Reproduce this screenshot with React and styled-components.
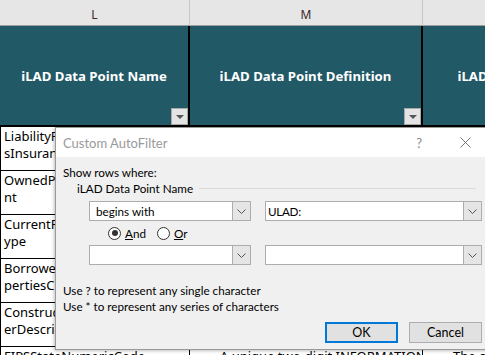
import React from 'react';
import styled, { createGlobalStyle } from 'styled-components';

const GlobalStyle = createGlobalStyle`
  html, body {
    margin: 0;
    padding: 0;
    background: #ffffff;
    overflow: hidden;
  }
`;

const columns = [
  { letter: 'L', title: 'iLAD Data Point Name' },
  { letter: 'M', title: 'iLAD Data Point Definition' },
  { letter: 'N', title: 'iLAD Data Point Format' },
];

const rows = [
  ['LiabilityP', 'sInsuran'],
  ['OwnedP', 'nt'],
  ['CurrentR', 'ype'],
  ['Borrowe', 'pertiesC'],
  ['Construc', 'erDescri'],
];

const Chevron = () => (
  <svg width="9" height="5" viewBox="0 0 9 5">
    <path d="M0.5 0.5 L4.5 4.5 L8.5 0.5" fill="none" stroke="#555" strokeWidth="1" />
  </svg>
);

const FilterArrow = () => (
  <svg width="8" height="4" viewBox="0 0 8 4">
    <path d="M0 0 H8 L4 4 Z" fill="#555" />
  </svg>
);

const App = () => {
  return (
    <Page>
      <GlobalStyle />
      <Sheet>
        {columns.map((c) => (
          <LetterCell key={c.letter}>{c.letter}</LetterCell>
        ))}
        {columns.map((c) => (
          <HeaderCell key={c.title}>
            <HeaderTitle>{c.title}</HeaderTitle>
            <FilterButton>
              <FilterArrow />
            </FilterButton>
          </HeaderCell>
        ))}
        {rows.map((r, i) => (
          <React.Fragment key={i}>
            <DataCell>
              {r[0]}
              <br />
              {r[1]}
            </DataCell>
            <DataCell />
            <DataCell />
          </React.Fragment>
        ))}
        <DataCell>FIPSStateNumericCode</DataCell>
        <DataCell $indent>A unique two-digit   INFORMATION</DataCell>
        <DataCell $indent>The code</DataCell>
      </Sheet>

      <Dialog>
        <TitleBar>
          <TitleText>Custom AutoFilter</TitleText>
          <TitleButtons>
            <HelpMark>?</HelpMark>
            <svg width="11" height="11" viewBox="0 0 11 11">
              <path d="M0.5 0.5 L10.5 10.5 M10.5 0.5 L0.5 10.5" stroke="#777" strokeWidth="1" />
            </svg>
          </TitleButtons>
        </TitleBar>
        <Body>
          <Label>Show rows where:</Label>
          <GroupRow>
            <GroupLabel>iLAD Data Point Name</GroupLabel>
            <GroupLine />
          </GroupRow>
          <ComboRow>
            <Combo $width={162}>
              <ComboText>begins with</ComboText>
              <ComboButton>
                <Chevron />
              </ComboButton>
            </Combo>
            <Combo $width={217}>
              <ComboText $tight>ULAD:</ComboText>
              <ComboButton>
                <Chevron />
              </ComboButton>
            </Combo>
          </ComboRow>
          <RadioRow>
            <RadioOption>
              <Radio $checked />
              <span>
                <u>A</u>nd
              </span>
            </RadioOption>
            <RadioOption>
              <Radio />
              <span>
                <u>O</u>r
              </span>
            </RadioOption>
          </RadioRow>
          <ComboRow $tight>
            <Combo $width={162}>
              <ComboText />
              <ComboButton>
                <Chevron />
              </ComboButton>
            </Combo>
            <Combo $width={217}>
              <ComboText />
              <ComboButton>
                <Chevron />
              </ComboButton>
            </Combo>
          </ComboRow>
          <Hints>
            <Label>Use ? to represent any single character</Label>
            <Label>Use * to represent any series of characters</Label>
          </Hints>
          <ButtonRow>
            <Button $primary>OK</Button>
            <Button>Cancel</Button>
          </ButtonRow>
        </Body>
      </Dialog>
    </Page>
  );
};

const Page = styled.div`
  position: relative;
  width: 485px;
  height: 355px;
  overflow: hidden;
  background: #ffffff;
`;

const Sheet = styled.div`
  display: grid;
  grid-template-columns: 190px 233px 225px;
  grid-auto-rows: 44px;
  grid-template-rows: 26px 101px;
`;

const LetterCell = styled.div`
  display: flex;
  align-items: center;
  justify-content: center;
  background: #e6e6e6;
  border-right: 1px solid #c6c6c6;
  border-bottom: 1px solid #9e9e9e;
  box-sizing: border-box;
  font-family: 'Noto Sans', sans-serif;
  font-size: 12px;
  color: #3a2a2a;
  padding-top: 4px;
`;

const HeaderCell = styled.div`
  position: relative;
  display: flex;
  align-items: center;
  justify-content: center;
  background: #215967;
  border-right: 2px solid #000;
  border-bottom: 2px solid #000;
  box-sizing: border-box;
`;

const HeaderTitle = styled.span`
  font-family: 'Noto Sans', sans-serif;
  font-weight: 700;
  font-size: 13.2px;
  color: #ffffff;
  white-space: nowrap;
  margin-top: 1px;
`;

const FilterButton = styled.div`
  position: absolute;
  right: 0;
  bottom: 0;
  width: 15px;
  height: 15px;
  display: flex;
  align-items: center;
  justify-content: center;
  background: #e4e4e4;
  border: 1px solid #a8a8a8;
`;

const DataCell = styled.div`
  box-sizing: border-box;
  border-bottom: 1px solid #000;
  border-right: 1px solid #000;
  padding: 1px 0 0 ${(p) => (p.$indent ? 30 : 3)}px;
  font-family: 'Noto Sans', sans-serif;
  font-size: 13px;
  line-height: 17px;
  color: #000;
  white-space: nowrap;
  overflow: hidden;
  &:nth-child(3n + 1) {
    border-left: 1px solid #000;
  }
`;

const Dialog = styled.div`
  position: absolute;
  left: 55px;
  top: 127px;
  width: 440px;
  height: 221px;
  display: flex;
  flex-direction: column;
  background: #f0f0f0;
  border: 1px solid #9a9a9a;
  box-shadow: -1px 1px 3px rgba(0, 0, 0, 0.25);
  font-family: Lato, 'Noto Sans', sans-serif;
  font-size: 11.7px;
  color: #000;
`;

const TitleBar = styled.div`
  height: 29px;
  display: flex;
  align-items: center;
  justify-content: space-between;
  background: #ffffff;
  padding: 0 0 0 7px;
`;

const TitleText = styled.span`
  font-size: 13px;
  color: #999999;
`;

const TitleButtons = styled.div`
  display: flex;
  align-items: center;
  gap: 38px;
  padding-right: 25px;
`;

const HelpMark = styled.span`
  font-size: 13px;
  color: #888;
`;

const Body = styled.div`
  display: flex;
  flex-direction: column;
  padding: 7px 0 0 7px;
`;

const Label = styled.div`
  line-height: 16px;
  white-space: nowrap;
`;

const GroupRow = styled.div`
  display: flex;
  align-items: center;
  gap: 6px;
  padding-left: 14px;
  height: 16px;
  width: 399px;
`;

const GroupLabel = styled.span`
  white-space: nowrap;
`;

const GroupLine = styled.div`
  flex: 1;
  height: 1px;
  background: #dadada;
`;

const ComboRow = styled.div`
  display: flex;
  gap: 14px;
  padding-left: 26px;
  margin-top: ${(p) => (p.$tight ? 2 : 5)}px;
`;

const Combo = styled.div`
  width: ${(p) => p.$width}px;
  height: 20px;
  box-sizing: border-box;
  display: flex;
  background: #ffffff;
  border: 1px solid #adadad;
`;

const ComboText = styled.div`
  flex: 1;
  display: flex;
  align-items: center;
  padding-left: ${(p) => (p.$tight ? 2 : 6)}px;
  color: #000;
  letter-spacing: ${(p) => (p.$tight ? '-0.3px' : '0')};
`;

const ComboButton = styled.div`
  width: 17px;
  display: flex;
  align-items: center;
  justify-content: center;
  background: #e5e5e5;
  border-left: 1px solid #adadad;
`;

const RadioRow = styled.div`
  display: flex;
  gap: 11px;
  padding-left: 45px;
  height: 20px;
  align-items: center;
  margin-top: 2px;
`;

const RadioOption = styled.div`
  display: flex;
  align-items: center;
  gap: 4px;
`;

const Radio = styled.span`
  width: 11px;
  height: 11px;
  border: 1px solid #333;
  border-radius: 50%;
  background: #fff;
  display: flex;
  align-items: center;
  justify-content: center;
  &::after {
    content: '';
    width: 6px;
    height: 6px;
    border-radius: 50%;
    background: ${(p) => (p.$checked ? '#333' : 'transparent')};
  }
`;

const Hints = styled.div`
  display: flex;
  flex-direction: column;
  margin-top: 17px;
`;

const ButtonRow = styled.div`
  display: flex;
  justify-content: flex-end;
  gap: 11px;
  padding-right: 5px;
  margin-top: 8px;
  width: 419px;
`;

const Button = styled.div`
  width: 73px;
  height: 21px;
  box-sizing: border-box;
  display: flex;
  align-items: center;
  justify-content: center;
  background: #e1e1e1;
  border: ${(p) => (p.$primary ? '2px solid #0078d7' : '1px solid #adadad')};
  font-size: 12.5px;
`;

export default App;
